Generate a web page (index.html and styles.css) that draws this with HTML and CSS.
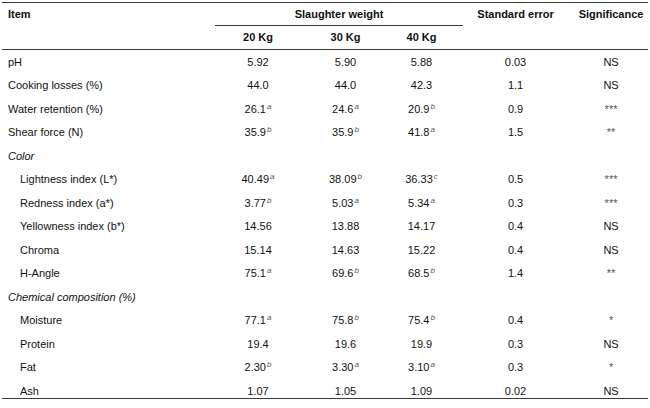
FILE: index.html
```html
<!DOCTYPE html>
<html>
<head>
<meta charset="utf-8">
<link rel="stylesheet" href="styles.css">
</head>
<body>
<table class="data">
  <colgroup>
    <col class="c-item">
    <col class="c-w20">
    <col class="c-w30">
    <col class="c-w40">
    <col class="c-se">
    <col class="c-sig">
  </colgroup>
  <thead>
    <tr class="h1">
      <th class="item-h" rowspan="2">Item</th>
      <th class="group" colspan="3">Slaughter weight</th>
      <th class="se-h" rowspan="2">Standard error</th>
      <th class="sig-h" rowspan="2">Significance</th>
    </tr>
    <tr class="h2">
      <th>20 Kg</th>
      <th>30 Kg</th>
      <th class="w40">40 Kg</th>
    </tr>
  </thead>
  <tbody>
    <tr><td class="lbl">pH</td><td>5.92</td><td>5.90</td><td class="w40">5.88</td><td>0.03</td><td class="sig">NS</td></tr>
    <tr><td class="lbl">Cooking losses (%)</td><td>44.0</td><td>44.0</td><td class="w40">42.3</td><td>1.1</td><td class="sig">NS</td></tr>
    <tr><td class="lbl">Water retention (%)</td><td>26.1<sup>a</sup></td><td>24.6<sup>a</sup></td><td class="w40">20.9<sup>b</sup></td><td>0.9</td><td class="sig star">***</td></tr>
    <tr><td class="lbl">Shear force (N)</td><td>35.9<sup>b</sup></td><td>35.9<sup>b</sup></td><td class="w40">41.8<sup>a</sup></td><td>1.5</td><td class="sig star">**</td></tr>
    <tr><td class="lbl cat">Color</td><td></td><td></td><td class="w40"></td><td></td><td class="sig"></td></tr>
    <tr><td class="lbl sub">Lightness index (L*)</td><td>40.49<sup>a</sup></td><td>38.09<sup>b</sup></td><td class="w40">36.33<sup>c</sup></td><td>0.5</td><td class="sig star">***</td></tr>
    <tr><td class="lbl sub">Redness index (a*)</td><td>3.77<sup>b</sup></td><td>5.03<sup>a</sup></td><td class="w40">5.34<sup>a</sup></td><td>0.3</td><td class="sig star">***</td></tr>
    <tr><td class="lbl sub">Yellowness index (b*)</td><td>14.56</td><td>13.88</td><td class="w40">14.17</td><td>0.4</td><td class="sig">NS</td></tr>
    <tr><td class="lbl sub">Chroma</td><td>15.14</td><td>14.63</td><td class="w40">15.22</td><td>0.4</td><td class="sig">NS</td></tr>
    <tr><td class="lbl sub">H-Angle</td><td>75.1<sup>a</sup></td><td>69.6<sup>b</sup></td><td class="w40">68.5<sup>b</sup></td><td>1.4</td><td class="sig star">**</td></tr>
    <tr><td class="lbl cat">Chemical composition (%)</td><td></td><td></td><td class="w40"></td><td></td><td class="sig"></td></tr>
    <tr><td class="lbl sub">Moisture</td><td>77.1<sup>a</sup></td><td>75.8<sup>b</sup></td><td class="w40">75.4<sup>b</sup></td><td>0.4</td><td class="sig star">*</td></tr>
    <tr><td class="lbl sub">Protein</td><td>19.4</td><td>19.6</td><td class="w40">19.9</td><td>0.3</td><td class="sig">NS</td></tr>
    <tr><td class="lbl sub">Fat</td><td>2.30<sup>b</sup></td><td>3.30<sup>a</sup></td><td class="w40">3.10<sup>a</sup></td><td>0.3</td><td class="sig star">*</td></tr>
    <tr class="last"><td class="lbl sub">Ash</td><td>1.07</td><td>1.05</td><td class="w40">1.09</td><td>0.02</td><td class="sig">NS</td></tr>
  </tbody>
</table>
</body>
</html>
```

FILE: styles.css
```css
html, body {
  margin: 0;
  padding: 0;
  background: #ffffff;
}

body {
  font-family: "Liberation Sans", Arial, sans-serif;
  font-size: 11px;
  color: #111;
}

.data {
  margin: 2px 0 0 2px;
  width: 646px;
  table-layout: fixed;
  border-collapse: separate;
  border-spacing: 0;
  border-top: 1px solid #3a3a3a;
}

.c-item { width: 213px; }
.c-w20 { width: 86px; }
.c-w30 { width: 89px; }
.c-w40 { width: 73px; }
.c-se { width: 105px; }
.c-sig { width: 80px; }

th {
  font-weight: bold;
  text-align: center;
  padding: 0;
  line-height: 13px;
}

.h1 th {
  height: 22px;
  vertical-align: middle;
}

.h1 .item-h,
.h1 .se-h,
.h1 .sig-h {
  vertical-align: top;
  padding-top: 5px;
  height: auto;
  border-bottom: 1px solid #3a3a3a;
}

.h1 .item-h {
  text-align: left;
  padding-left: 6px;
}

.h1 .group {
  border-bottom: 1px solid #3a3a3a;
}

.h2 th {
  height: 23px;
  vertical-align: middle;
  border-bottom: 1px solid #3a3a3a;
}

.h1 .sig-h {
  padding-left: 6px;
}

td {
  text-align: center;
  vertical-align: top;
  line-height: 13px;
  padding: 5.5px 0 5px 0;
  white-space: nowrap;
}

td.w40,
th.w40 {
  padding-right: 10px;
}

td.sig {
  padding-left: 6px;
}

td.lbl {
  text-align: left;
  padding-left: 6px;
}

td.sub {
  padding-left: 18px;
}

td.cat {
  font-style: italic;
}

td.star {
  color: #555;
}

sup {
  font-size: 8px;
  font-style: italic;
  color: #555;
  line-height: 0;
  vertical-align: 4px;
  margin-left: 1px;
}

tr.last td {
  padding-bottom: 0.5px;
  border-bottom: 1px solid #3a3a3a;
}
```
